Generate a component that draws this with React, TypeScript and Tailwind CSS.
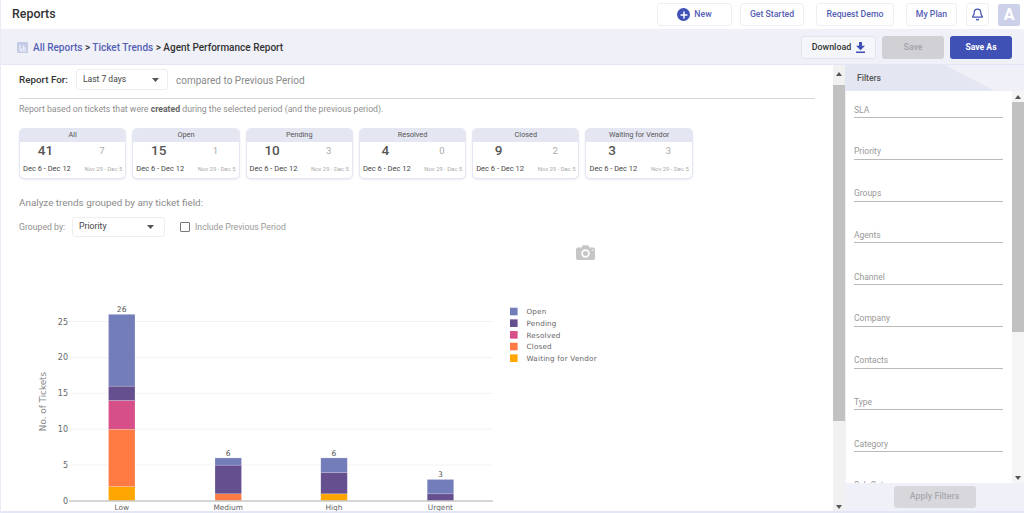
import React from "react";
import { Bell, Plus, ChartColumn } from "lucide-react";

const cards = [
  ["All", "41", "7"],
  ["Open", "15", "1"],
  ["Pending", "10", "3"],
  ["Resolved", "4", "0"],
  ["Closed", "9", "2"],
  ["Waiting for Vendor", "3", "3"],
];
const filters = ["SLA", "Priority", "Groups", "Agents", "Channel", "Company", "Contacts", "Type", "Category", "Sub Category"];

const C = { open: "#737dba", pending: "#654f8f", resolved: "#d64f88", closed: "#ff7b43", waiting: "#ffa600" };
const legend: [string, string][] = [
  ["Open", C.open],
  ["Pending", C.pending],
  ["Resolved", C.resolved],
  ["Closed", C.closed],
  ["Waiting for Vendor", C.waiting],
];
const bars: { x: number; label: string; total: number; segs: [number, number, string][] }[] = [
  { x: 108.5, label: "Low", total: 26, segs: [[0, 2, C.waiting], [2, 10, C.closed], [10, 14, C.resolved], [14, 16, C.pending], [16, 26, C.open]] },
  { x: 215, label: "Medium", total: 6, segs: [[0, 1, C.closed], [1, 5, C.pending], [5, 6, C.open]] },
  { x: 320.8, label: "High", total: 6, segs: [[0, 1, C.waiting], [1, 4, C.pending], [4, 6, C.open]] },
  { x: 427.2, label: "Urgent", total: 3, segs: [[0, 1, C.pending], [1, 3, C.open]] },
];

const Y0 = 261;
const U = 7.18;
const y = (v: number) => Y0 - v * U;

function Chart() {
  const font = "'DejaVu Sans', Verdana, sans-serif";
  return (
    <svg width="620" height="273" className="block" style={{ fontFamily: font }}>
      {[5, 10, 15, 20, 25].map((v) => (
        <line key={v} x1="69" x2="493" y1={y(v)} y2={y(v)} stroke="#f3f3f3" strokeWidth="1" />
      ))}
      {[0, 5, 10, 15, 20, 25].map((v) => (
        <text key={v} x="68" y={y(v) + 3} textAnchor="end" fontSize="8" fill="#666">{v}</text>
      ))}
      <text x="0" y="0" transform={`translate(46 161.5) rotate(-90)`} textAnchor="middle" fontSize="8.8" fill="#888">No. of Tickets</text>
      {bars.map((b) => (
        <g key={b.label}>
          {b.segs.map(([from, to, c]) => (
            <rect key={from} x={b.x} y={y(to)} width="26.5" height={(to - from) * U} fill={c} stroke="#fff" strokeOpacity="0.4" strokeWidth="0.5" />
          ))}
          <text x={b.x + 13.2} y={y(b.total) - 2} textAnchor="middle" fontSize="7.6" fill="#555">{b.total}</text>
          <text x={b.x + 13.2} y={y(0) + 8.5} textAnchor="middle" fontSize="7.4" fill="#666">{b.label}</text>
        </g>
      ))}
      <line x1="69" x2="493" y1={y(0)} y2={y(0)} stroke="#c8c8c8" strokeWidth="1.5" />
      {legend.map(([t, c], i) => (
        <g key={t}>
          <rect x="510" y={67.7 + i * 11.67} width="7.6" height="7.6" fill={c} />
          <text x="526.5" y={74.2 + i * 11.67} fontSize="7.2" fill="#666" letterSpacing="0.2">{t}</text>
        </g>
      ))}
    </svg>
  );
}

function Arrow({ up }: { up?: boolean }) {
  return (
    <svg width="6" height="4" viewBox="0 0 6 4" className="block">
      <path d={up ? "M0 4 L3 0 L6 4 Z" : "M0 0 L3 4 L6 0 Z"} fill="#555" />
    </svg>
  );
}

function Caret() {
  return (
    <svg width="7" height="4" viewBox="0 0 7 4" className="block">
      <path d="M0 0 L3.5 4 L7 0 Z" fill="#555" />
    </svg>
  );
}

function DownloadIcon() {
  return (
    <svg width="9" height="11" viewBox="0 0 9 11" className="block">
      <path d="M3 0 H6 V3.8 H9 L4.5 8.2 L0 3.8 H3 Z M0 9.4 H9 V11 H0 Z" fill="#3f51b5" />
    </svg>
  );
}

function CameraIcon() {
  return (
    <svg width="19" height="15" viewBox="0 0 19 15" className="block">
      <path d="M2 2.5 H5.5 L6.8 0.3 H12.2 L13.5 2.5 H17 A2 2 0 0 1 19 4.5 V13 A2 2 0 0 1 17 15 H2 A2 2 0 0 1 0 13 V4.5 A2 2 0 0 1 2 2.5 Z" fill="#c6c6c6" />
      <circle cx="9.5" cy="8.5" r="4.2" fill="#fff" />
      <circle cx="9.5" cy="8.5" r="2.6" fill="#c6c6c6" />
      <circle cx="16.5" cy="5" r="0.8" fill="#fff" />
    </svg>
  );
}

const topBtn = "flex h-[23px] items-center justify-center rounded-[3px] border border-[#eeeff5] bg-white text-[8.7px] font-medium text-[#5560b5]";

export default function App() {
  return (
    <div className="flex h-[513px] w-[1024px] flex-col overflow-hidden border-l border-[#e8eaf4] bg-white font-['Roboto',sans-serif] text-[#333]">
      <header className="flex h-[29px] shrink-0 items-center pl-[11px] pr-[4px]">
        <h1 className="text-[12.4px] font-medium leading-none text-[#333]">Reports</h1>
        <div className="ml-auto flex items-center">
          <button className={`${topBtn} w-[75px] gap-[4px]`}>
            <span className="flex h-[13px] w-[13px] items-center justify-center rounded-full bg-[#3f51b5]">
              <Plus size={10} strokeWidth={3.5} color="#fff" />
            </span>
            New
          </button>
          <button className={`${topBtn} ml-[8px] w-[64px]`}>Get Started</button>
          <button className={`${topBtn} ml-[12px] w-[78px]`}>Request Demo</button>
          <button className={`${topBtn} ml-[12px] w-[51px]`}>My Plan</button>
          <button className={`${topBtn} ml-[9px] w-[23px]`}>
            <Bell size={13} color="#3f51b5" strokeWidth={2.2} />
          </button>
          <div className="ml-[9px] flex h-[22px] w-[22px] items-center justify-center rounded-[2px] bg-[#ccd1e9] text-[16px] font-bold text-white">A</div>
        </div>
      </header>

      <div className="flex h-[36px] shrink-0 items-center border-b border-[#e3e6f5] bg-[#f0f1f8] pl-[16px] pr-[12px] pt-[2px]">
        <span className="flex h-[11px] w-[11px] items-center justify-center rounded-[1px] bg-[#c5cae6]">
          <ChartColumn size={8} color="#fff" strokeWidth={2.5} />
        </span>
        <div className="ml-[5px] text-[10px] font-medium">
          <span className="text-[#5560b5]">All Reports</span>
          <span className="text-[#333]"> &gt; </span>
          <span className="text-[#5560b5]">Ticket Trends</span>
          <span className="text-[#333]"> &gt; Agent Performance Report</span>
        </div>
        <div className="ml-auto flex items-center">
          <button className="flex h-[23px] w-[75px] items-center justify-center gap-[5px] rounded-[3px] border border-[#e3e4ec] bg-[#f5f6fa] text-[8.9px] font-medium text-[#333]">
            Download <DownloadIcon />
          </button>
          <button className="ml-[6px] flex h-[23px] w-[62px] items-center justify-center rounded-[3px] bg-[#d1d1d5] text-[8.6px] font-bold text-[#a8a8ad]">Save</button>
          <button className="ml-[6px] flex h-[23px] w-[62px] items-center justify-center rounded-[3px] bg-[#3f51b5] text-[8.6px] font-bold text-white">Save As</button>
        </div>
      </div>

      <div className="flex min-h-0 flex-1">
        <main className="min-w-0 flex-1 overflow-hidden pl-[18px] pt-[4px]">
          <div className="flex h-[21px] items-center">
            <span className="mt-px w-[49px] whitespace-nowrap text-[9.8px] font-medium text-[#333]">Report For:</span>
            <div className="ml-[8px] flex h-[21px] w-[92px] items-center justify-between rounded-[3px] border border-[#eeeeee] pl-[6px] pr-[8px] text-[8.5px] text-[#444]">
              Last 7 days <Caret />
            </div>
            <span className="ml-[8px] mt-px text-[10px] text-[#8a8a8a]">compared to Previous Period</span>
          </div>
          <div className="mt-[8px] h-px w-[796px] bg-[#d6d6d6]" />
          <p className="mt-[4px] text-[8.7px] leading-[12px] text-[#8f8f8f]">
            Report based on tickets that were <b className="font-bold text-[#666]">created</b> during the selected period (and the previous period).
          </p>
          <div className="mt-[13px] flex gap-[6px]">
            {cards.map(([name, a, b]) => (
              <div key={name} className="w-[107.3px] overflow-hidden rounded-[5px] border border-[#e4e6f2] bg-white shadow-[0_1px_2px_rgba(63,81,181,0.12)]">
                <div className="flex h-[13px] items-center justify-center bg-[#e4e6f2] text-[7.3px] text-[#555]">{name}</div>
                <div className="flex h-[18px] items-center pl-[10px]">
                  <span className="w-[31px] text-center text-[13.5px] font-medium leading-none text-[#555]">{a}</span>
                  <span className="ml-[35px] mt-px w-[12px] text-center text-[9.5px] text-[#aaa]">{b}</span>
                </div>
                <div className="flex h-[18px] items-center justify-between px-[3px]">
                  <span className="text-[7.5px] text-[#444]">Dec 6 - Dec 12</span>
                  <span className="text-[5.9px] text-[#aaa]">Nov 29 - Dec 5</span>
                </div>
              </div>
            ))}
          </div>
          <p className="mt-[17px] text-[9.9px] leading-[14px] text-[#8a8a8a]">Analyze trends grouped by any ticket field:</p>
          <div className="mt-[7px] flex h-[20px] items-center">
            <span className="mt-px w-[46px] whitespace-nowrap text-[8.7px] text-[#8f8f8f]">Grouped by:</span>
            <div className="ml-[7px] flex h-[20px] w-[93px] items-center justify-between rounded-[3px] border border-[#eeeeee] pl-[6px] pr-[10px] text-[8.7px] text-[#444]">
              Priority <Caret />
            </div>
            <span className="ml-[15px] h-[10px] w-[10px] rounded-[1px] border border-[#777]" />
            <span className="ml-[5px] mt-px text-[8.7px] text-[#999]">Include Previous Period</span>
          </div>
          <div className="relative -ml-[19px] mt-[3px]">
            <Chart />
            <div className="absolute left-[576px] top-[5px]"><CameraIcon /></div>
          </div>
        </main>

        <div className="flex w-3 shrink-0 flex-col items-center bg-[#f1f1f1]">
          <div className="flex h-[17px] items-center justify-center"><Arrow up /></div>
          <div className="min-h-0 w-full flex-1"><div className="mt-[3px] h-[336px] w-full bg-[#c1c1c1]" /></div>
          <div className="flex h-[8px] items-center justify-center"><Arrow /></div>
        </div>

        <aside className="flex w-[179px] shrink-0 flex-col bg-[#f0f1f8]">
          <div className="relative h-[26px] shrink-0 bg-[#f0f1f8]">
            <div className="absolute inset-0 bg-[#e4e6f2] [clip-path:polygon(0_0,100px_0,150px_26px,0_26px)]" />
            <span className="absolute left-[12px] top-[7px] text-[8.6px] font-medium leading-[12px] text-[#555]">Filters</span>
          </div>
          <div className="flex min-h-0 flex-1 pl-px">
            <div className="min-w-0 flex-1 overflow-hidden bg-white pl-[8px] pr-[9px]">
              {filters.map((f) => (
                <div key={f} className="flex h-[41.75px] items-end border-b border-[#b9b9b9] pb-[1.5px] text-[8.5px] leading-[12px] text-[#999] first:h-[27px]">
                  {f}
                </div>
              ))}
            </div>
            <div className="flex w-3 shrink-0 flex-col items-center bg-[#f5f5f5]">
              <div className="flex h-[11px] items-center justify-center"><Arrow up /></div>
              <div className="min-h-0 w-full flex-1"><div className="h-[230px] w-full bg-[#c1c1c1]" /></div>
              <div className="flex h-[11px] items-center justify-center"><Arrow /></div>
            </div>
          </div>
          <div className="flex h-[28px] shrink-0 items-center justify-center">
            <button className="h-[22px] w-[82px] rounded-[3px] bg-[#d7d7dc] text-[8.9px] font-medium text-[#a9a9ae]">Apply Filters</button>
          </div>
        </aside>
      </div>
      <div className="h-[2px] shrink-0 bg-[#e3e6f5]" />
    </div>
  );
}
